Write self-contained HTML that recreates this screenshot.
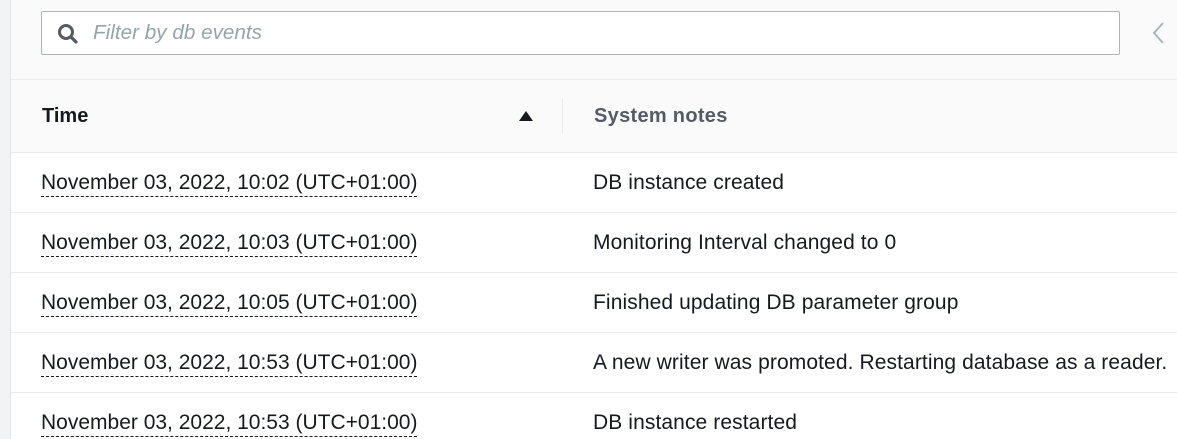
<!DOCTYPE html>
<html><head><style>
body{margin:0;width:1177px;height:439px;overflow:hidden;background:#fff;font-family:"Liberation Sans",sans-serif;position:relative;color:#16191f}
.lp{position:absolute;left:0;top:0;width:10px;height:439px;background:#f2f3f3;border-right:1px solid #e1e4e8}
.top{position:absolute;left:11px;top:0;right:0;height:152px;background:#fafafa}
.hl{position:absolute;left:11px;right:0;height:1px;background:#eaeded}
.search{position:absolute;left:41px;top:11px;width:1077px;height:42px;border:1px solid #aab7b8;border-radius:2px;background:#fff}
.ph{position:absolute;left:51px;top:9px;font-size:20.7px;font-style:italic;color:#95a5a6}
.t{position:absolute;font-size:21px;white-space:nowrap;line-height:24px}
.d{left:41px;border-bottom:1px dashed #16191f;padding-bottom:1px;letter-spacing:0}
.n{left:593px;letter-spacing:0.1px}
</style></head><body>
<div class="lp"></div>
<div class="top"></div>
<div class="search">
<svg style="position:absolute;left:14px;top:10px" width="24" height="24" viewBox="0 0 24 24"><circle cx="10" cy="10" r="6.5" fill="none" stroke="#545b64" stroke-width="3"/><line x1="15" y1="15" x2="20" y2="20" stroke="#545b64" stroke-width="3.2" stroke-linecap="round"/></svg>
<div class="ph">Filter by db events</div></div>
<svg style="position:absolute;left:1151px;top:22px" width="14" height="22" viewBox="0 0 14 22"><path d="M12 1L3 11L12 21" fill="none" stroke="#aab7b8" stroke-width="2"/></svg>
<div class="hl" style="top:79px"></div>
<div class="t" style="left:42px;top:104px;font-weight:bold;font-size:20px">Time</div>
<svg style="position:absolute;left:518px;top:110px" width="16" height="12"><path d="M1 11L8 1L15 11Z" fill="#16191f"/></svg>
<div style="position:absolute;left:562px;top:98px;width:1px;height:36px;background:#eaeded"></div>
<div class="t" style="left:594px;top:104px;font-weight:bold;color:#545b64;font-size:20px;letter-spacing:0.3px">System notes</div>
<div class="hl" style="top:152px"></div>
<div class="t d" style="top:171px">November 03, 2022, 10:02 (UTC+01:00)</div><div class="t n" style="top:171px">DB instance created</div>
<div class="hl" style="top:212px"></div>
<div class="t d" style="top:231px">November 03, 2022, 10:03 (UTC+01:00)</div><div class="t n" style="top:231px">Monitoring Interval changed to 0</div>
<div class="hl" style="top:272px"></div>
<div class="t d" style="top:291px">November 03, 2022, 10:05 (UTC+01:00)</div><div class="t n" style="top:291px">Finished updating DB parameter group</div>
<div class="hl" style="top:332px"></div>
<div class="t d" style="top:351px">November 03, 2022, 10:53 (UTC+01:00)</div><div class="t n" style="top:351px">A new writer was promoted. Restarting database as a reader.</div>
<div class="hl" style="top:392px"></div>
<div class="t d" style="top:411px">November 03, 2022, 10:53 (UTC+01:00)</div><div class="t n" style="top:411px">DB instance restarted</div>
</body></html>
